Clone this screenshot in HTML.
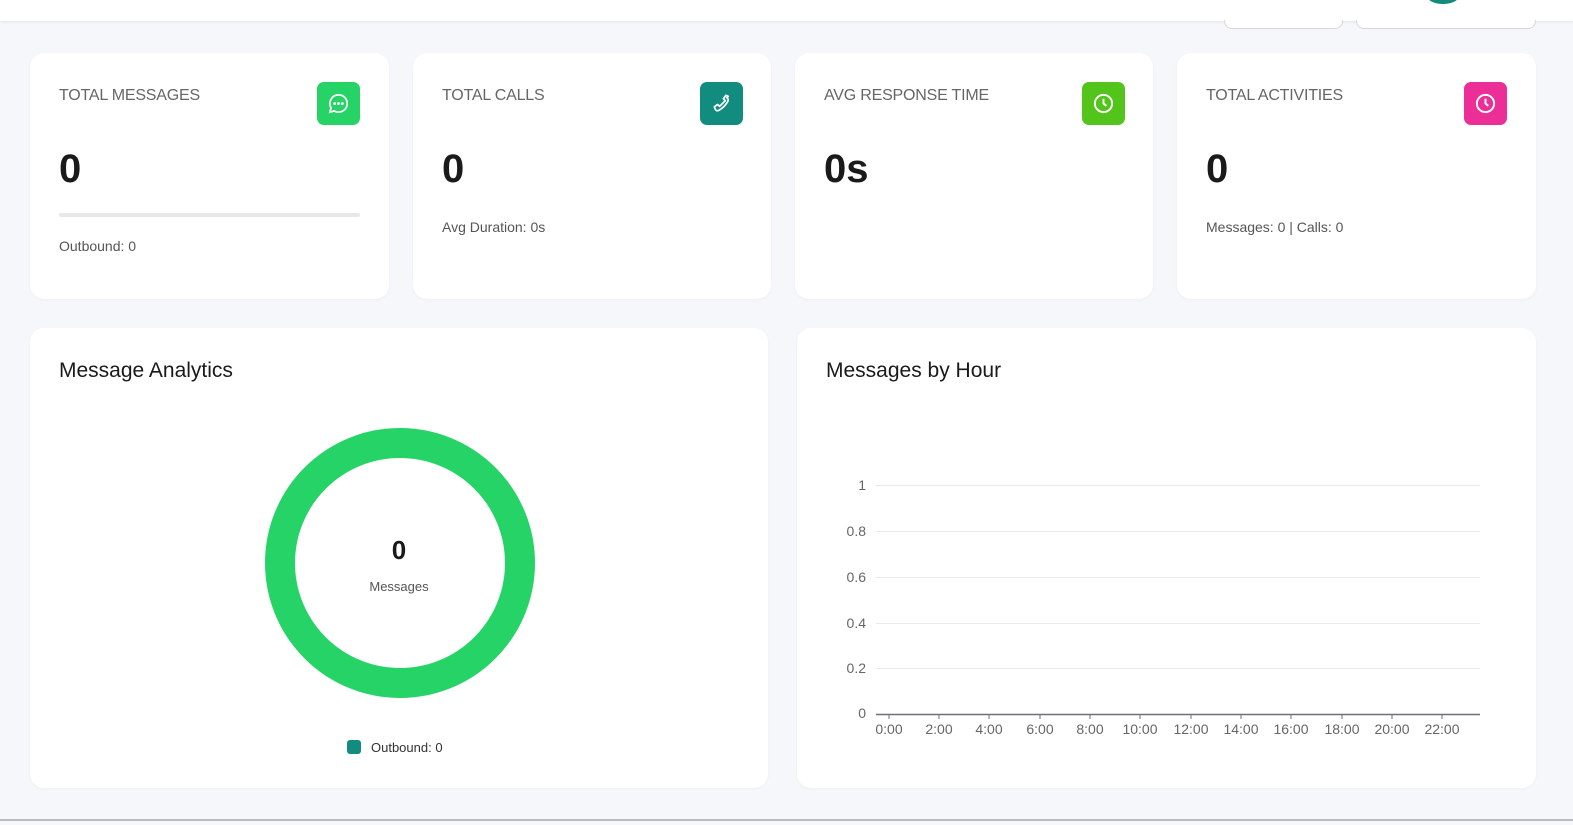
<!DOCTYPE html>
<html><head><meta charset="utf-8"><style>
*{box-sizing:border-box;margin:0;padding:0}
body{width:1573px;height:825px;overflow:hidden;background:#f6f7fb;font-family:"Liberation Sans",sans-serif;position:relative}
.hdr{position:absolute;left:0;top:0;width:1573px;height:21px;background:#fff;box-shadow:0 1px 3px rgba(0,0,0,.08)}
.btn{position:absolute;top:10px;height:19px;border:1px solid #d8d8dc;border-top:none;border-radius:0 0 8px 8px;background:#fff}
.card{position:absolute;background:#fff;border-radius:14px;box-shadow:0 1px 3px rgba(0,0,0,.04)}
.lbl{position:absolute;left:29px;top:34px;font-size:16px;color:#666;letter-spacing:-0.2px}
.val{position:absolute;left:29px;top:94px;font-size:40px;font-weight:bold;color:#1a1a1a}
.ic{position:absolute;left:287px;top:29px;width:43px;height:43px;border-radius:7px}
.ic svg{position:absolute;left:10px;top:10px}
.sub{position:absolute;left:29px;font-size:14px;color:#555}
.ttl{position:absolute;left:29px;top:31px;font-size:21px;color:#1a1a1a}
.yl{position:absolute;font-size:13px;color:#666;text-align:right;width:30px}
.xl{position:absolute;font-size:13px;color:#666;top:720px}
</style></head><body>
<div class="hdr"></div>
<div style="position:absolute;left:1427px;top:-12px;width:32px;height:16px;border-radius:50%;background:#138a7a"></div>
<div class="btn" style="left:1224px;width:119px;top:20px;height:9px"></div>
<div class="btn" style="left:1356px;width:180px;top:20px;height:9px"></div>
<div style="position:absolute;left:0;top:819px;width:1573px;height:2px;background:#bbb"></div>

<div class="card" style="left:30px;top:53px;width:359px;height:246px">
<div class="lbl">TOTAL MESSAGES</div>
<div class="ic" style="background:#25d366"><svg width="23" height="23" viewBox="0 0 24 24" fill="none" stroke="#fff" stroke-width="1.8"><path d="M12 3a9 9 0 0 0-7.8 13.5L3 21l4.6-1.2A9 9 0 1 0 12 3z"/><circle cx="8" cy="12" r=".6" fill="#fff"/><circle cx="12" cy="12" r=".6" fill="#fff"/><circle cx="16" cy="12" r=".6" fill="#fff"/></svg></div>
<div class="val">0</div>
<div style="position:absolute;left:29px;top:160px;width:301px;height:4px;background:#e8e8ea;border-radius:2px"></div>
<div class="sub" style="top:185px">Outbound: 0</div>
</div>

<div class="card" style="left:413px;top:53px;width:358px;height:246px">
<div class="lbl">TOTAL CALLS</div>
<div class="ic" style="background:#128c7e"><svg width="23" height="23" viewBox="0 0 24 24" fill="none" stroke="#fff" stroke-width="1.8" stroke-linejoin="round"><path d="M19 4.5l-2.5-1-2.5 3.5 2 2-6 6-2-2-3.5 2.5 1 2.5c.5 1.5 2.5 2 4 1 3.5-2 7-5.5 9-9 1-1.5.5-3.5-1-4z"/></svg></div>
<div class="val">0</div>
<div class="sub" style="top:166px">Avg Duration: 0s</div>
</div>

<div class="card" style="left:795px;top:53px;width:358px;height:246px">
<div class="lbl">AVG RESPONSE TIME</div>
<div class="ic" style="background:#52c41a"><svg width="23" height="23" viewBox="0 0 24 24" fill="none" stroke="#fff" stroke-width="2"><circle cx="12" cy="12" r="9"/><path d="M12 7v5l3 2.5"/></svg></div>
<div class="val">0s</div>
</div>

<div class="card" style="left:1177px;top:53px;width:359px;height:246px">
<div class="lbl">TOTAL ACTIVITIES</div>
<div class="ic" style="background:#eb2f96"><svg width="23" height="23" viewBox="0 0 24 24" fill="none" stroke="#fff" stroke-width="2"><circle cx="12" cy="12" r="9"/><path d="M12 7v5l3 2.5"/></svg></div>
<div class="val">0</div>
<div class="sub" style="top:166px">Messages: 0 | Calls: 0</div>
</div>

<div class="card" style="left:30px;top:328px;width:738px;height:460px">
<div class="ttl">Message Analytics</div>
<svg style="position:absolute;left:235px;top:100px" width="270" height="270"><circle cx="135" cy="135" r="120" fill="none" stroke="#25d366" stroke-width="30"/></svg>
<div style="position:absolute;left:0;width:738px;text-align:center;top:208px;font-size:26px;font-weight:bold;color:#1a1a1a;padding-left:0;margin-left:-conflict"></div>
<div style="position:absolute;left:319px;width:100px;text-align:center;top:207px;font-size:26px;font-weight:bold;color:#1a1a1a">0</div>
<div style="position:absolute;left:319px;width:100px;text-align:center;top:251px;font-size:13px;color:#555">Messages</div>
<div style="position:absolute;left:317px;top:412px;width:14px;height:14px;border-radius:3px;background:#128c7e"></div>
<div style="position:absolute;left:341px;top:412px;font-size:13px;color:#333">Outbound: 0</div>
</div>

<div class="card" style="left:797px;top:328px;width:739px;height:460px">
<div class="ttl">Messages by Hour</div>
</div>
<svg style="position:absolute;left:0;top:0" width="1573" height="825">
<g stroke="#e6e9f0" stroke-width="1">
<line x1="876" x2="1480" y1="485.5" y2="485.5"/><line x1="876" x2="1480" y1="531.5" y2="531.5"/><line x1="876" x2="1480" y1="577.5" y2="577.5"/><line x1="876" x2="1480" y1="623.5" y2="623.5"/><line x1="876" x2="1480" y1="668.5" y2="668.5"/>
</g>
<line x1="876" x2="1480" y1="714.5" y2="714.5" stroke="#6e7079" stroke-width="1.5"/>
<g stroke="#6e7079"><line x1="889" x2="889" y1="714" y2="719"/><line x1="939" x2="939" y1="714" y2="719"/><line x1="989" x2="989" y1="714" y2="719"/><line x1="1040" x2="1040" y1="714" y2="719"/><line x1="1090" x2="1090" y1="714" y2="719"/><line x1="1140" x2="1140" y1="714" y2="719"/><line x1="1191" x2="1191" y1="714" y2="719"/><line x1="1241" x2="1241" y1="714" y2="719"/><line x1="1291" x2="1291" y1="714" y2="719"/><line x1="1342" x2="1342" y1="714" y2="719"/><line x1="1392" x2="1392" y1="714" y2="719"/><line x1="1442" x2="1442" y1="714" y2="719"/></g>
<g font-family="Liberation Sans" font-size="14" fill="#666" text-anchor="end">
<text x="866" y="490">1</text><text x="866" y="536">0.8</text><text x="866" y="582">0.6</text><text x="866" y="628">0.4</text><text x="866" y="673">0.2</text><text x="866" y="718">0</text></g>
<g font-family="Liberation Sans" font-size="14" fill="#666" text-anchor="middle">
<text x="889" y="734">0:00</text><text x="939" y="734">2:00</text><text x="989" y="734">4:00</text><text x="1040" y="734">6:00</text><text x="1090" y="734">8:00</text><text x="1140" y="734">10:00</text><text x="1191" y="734">12:00</text><text x="1241" y="734">14:00</text><text x="1291" y="734">16:00</text><text x="1342" y="734">18:00</text><text x="1392" y="734">20:00</text><text x="1442" y="734">22:00</text></g>
</svg>
</body></html>
